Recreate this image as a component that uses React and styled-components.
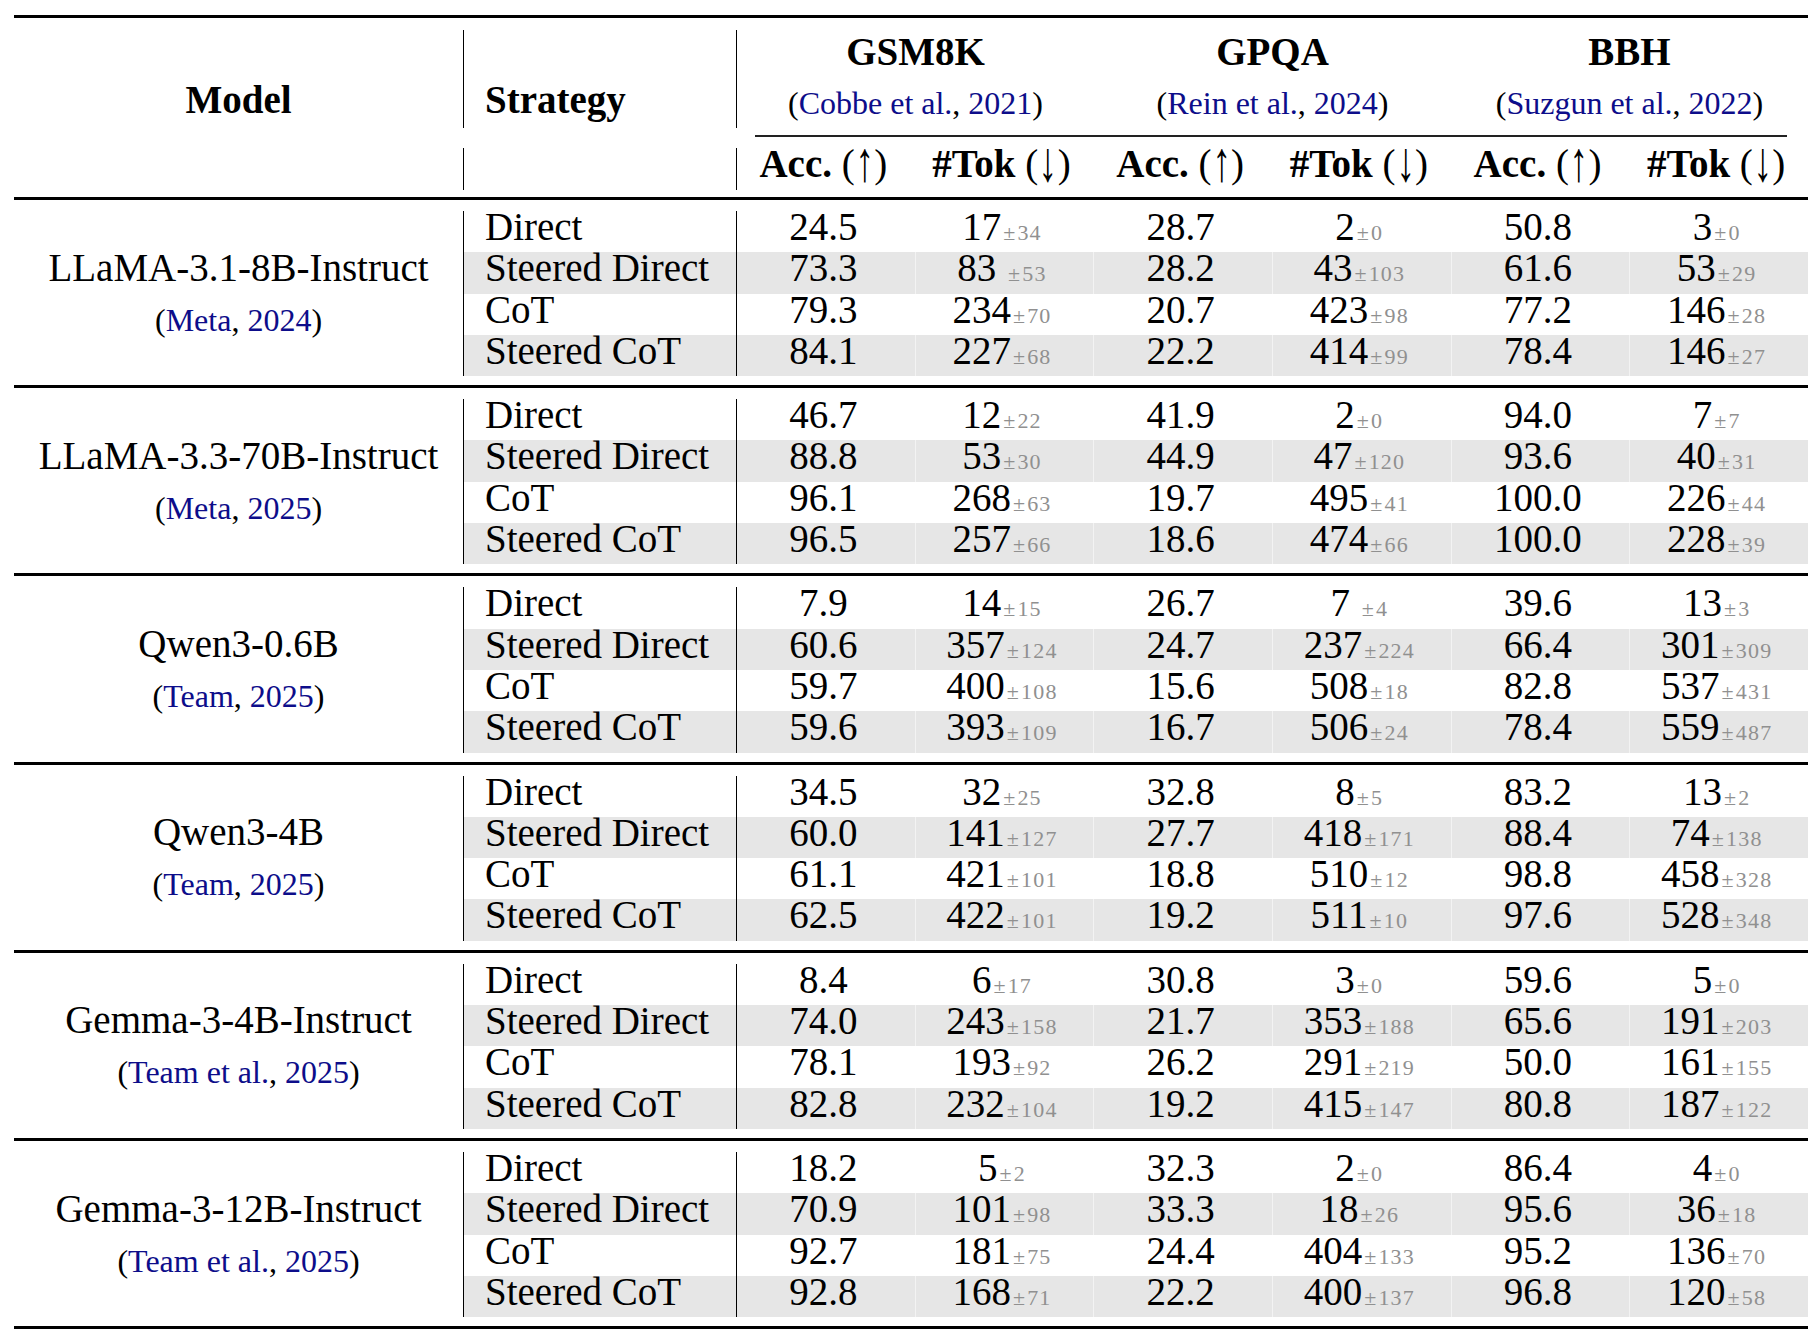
import React from "react";
import styled, { createGlobalStyle } from "styled-components";

const GlobalStyle = createGlobalStyle`
  html, body {
    margin: 0;
    padding: 0;
    background: #fff;
  }
  body {
    font-family: "Liberation Serif", "Times New Roman", serif;
    color: #000;
  }
`;

const COLS = "449px 273px repeat(6, 1fr)";
const SHADE = "#e6e6e6";
const VRULE = "1.4px solid #000";

const Page = styled.div`
  padding: 15px 0 0 14px;
`;

const Table = styled.div`
  width: 1794px;
`;

const Rule = styled.div`
  height: ${(p) => p.$weight}px;
  background: #000;
`;

// header, first line: titles and citations
const HeadTop = styled.div`
  display: grid;
  grid-template-columns: 449px 273px 1fr;
  padding-top: 12px;
`;

const HeadLabel = styled.div`
  height: 98px;
  box-sizing: border-box;
  padding-top: 47px;
  padding-left: ${(p) => (p.$ruled ? "21px" : "0")};
  line-height: 46px;
  font-size: 39px;
  font-weight: bold;
  text-align: ${(p) => (p.$ruled ? "left" : "center")};
  border-left: ${(p) => (p.$ruled ? VRULE : "none")};
`;

const Groups = styled.div`
  display: grid;
  grid-template-columns: repeat(3, 1fr);
  height: 98px;
  border-left: ${VRULE};
`;

const Group = styled.div`
  display: flex;
  flex-direction: column;
  align-items: center;
  white-space: nowrap;
`;

const GroupTitle = styled.div`
  font-size: 39px;
  font-weight: bold;
  line-height: 44px;
`;

const CiteLine = styled.div`
  font-size: 32px;
  line-height: ${(p) => p.$lh || 50}px;
  margin-top: ${(p) => p.$gap || 0}px;
`;

const CiteLink = styled.span`
  color: #0d0d8a;
`;

// thin rule under the dataset groups
const CmidRow = styled.div`
  display: grid;
  grid-template-columns: 449px 273px 1fr;
  padding: 7px 0 11.5px;
`;

const CmidLine = styled.div`
  grid-column: 3;
  height: 1.5px;
  margin: 0 21px 0 19px;
  background: #222;
`;

const HeadSub = styled.div`
  display: grid;
  grid-template-columns: ${COLS};
  height: 42px;
  margin-bottom: 7px;
`;

const SubCell = styled.div`
  border-left: ${(p) => (p.$ruled ? VRULE : "none")};
  text-align: center;
  padding-right: 5px;
  font-size: 39px;
  line-height: 31px;
  white-space: nowrap;
`;

const Bold = styled.b`
  font-weight: bold;
`;

const Arrow = styled.span`
  display: inline-block;
  transform: scale(0.95, 1.45);
  transform-origin: 50% 62%;
`;

// body blocks
const Block = styled.div`
  display: grid;
  grid-template-columns: ${COLS};
  grid-template-rows: repeat(4, 41.3px);
  padding: 11px 0 9px;
`;

const ModelCell = styled.div`
  grid-row: 1 / span 4;
  display: flex;
  flex-direction: column;
  justify-content: center;
  align-items: center;
  white-space: nowrap;
`;

const ModelName = styled.div`
  font-size: 39px;
  line-height: 52px;
`;

const StrategyCell = styled.div`
  border-left: ${VRULE};
  background: ${(p) => (p.$shaded ? SHADE : "transparent")};
  padding-left: 21px;
  font-size: 39px;
  line-height: 32px;
  white-space: nowrap;
`;

const ValueCell = styled.div`
  background: ${(p) => (p.$shaded ? SHADE : "transparent")};
  border-left: ${(p) =>
    p.$first ? VRULE : p.$shaded ? "1px solid #f3f3f3" : "1px solid transparent"};
  text-align: center;
  padding-right: 5px;
  font-size: 39px;
  line-height: 32px;
  white-space: nowrap;
`;

const Std = styled.span`
  font-size: 22px;
  letter-spacing: 1.2px;
  color: #909090;
`;

const Pm = styled.span`
  padding: 0 1px 0 2px;
`;

const datasets = [
  { name: "GSM8K", author: "Cobbe et al.", year: "2021" },
  { name: "GPQA", author: "Rein et al.", year: "2024" },
  { name: "BBH", author: "Suzgun et al.", year: "2022" },
];

const strategies = ["Direct", "Steered Direct", "CoT", "Steered CoT"];

const models = [
  {
    name: "LLaMA-3.1-8B-Instruct",
    author: "Meta",
    year: "2024",
    rows: [
      ["24.5", "17±34", "28.7", "2±0", "50.8", "3±0"],
      ["73.3", "83 ±53", "28.2", "43±103", "61.6", "53±29"],
      ["79.3", "234±70", "20.7", "423±98", "77.2", "146±28"],
      ["84.1", "227±68", "22.2", "414±99", "78.4", "146±27"],
    ],
  },
  {
    name: "LLaMA-3.3-70B-Instruct",
    author: "Meta",
    year: "2025",
    rows: [
      ["46.7", "12±22", "41.9", "2±0", "94.0", "7±7"],
      ["88.8", "53±30", "44.9", "47±120", "93.6", "40±31"],
      ["96.1", "268±63", "19.7", "495±41", "100.0", "226±44"],
      ["96.5", "257±66", "18.6", "474±66", "100.0", "228±39"],
    ],
  },
  {
    name: "Qwen3-0.6B",
    author: "Team",
    year: "2025",
    rows: [
      ["7.9", "14±15", "26.7", "7 ±4", "39.6", "13±3"],
      ["60.6", "357±124", "24.7", "237±224", "66.4", "301±309"],
      ["59.7", "400±108", "15.6", "508±18", "82.8", "537±431"],
      ["59.6", "393±109", "16.7", "506±24", "78.4", "559±487"],
    ],
  },
  {
    name: "Qwen3-4B",
    author: "Team",
    year: "2025",
    rows: [
      ["34.5", "32±25", "32.8", "8±5", "83.2", "13±2"],
      ["60.0", "141±127", "27.7", "418±171", "88.4", "74±138"],
      ["61.1", "421±101", "18.8", "510±12", "98.8", "458±328"],
      ["62.5", "422±101", "19.2", "511±10", "97.6", "528±348"],
    ],
  },
  {
    name: "Gemma-3-4B-Instruct",
    author: "Team et al.",
    year: "2025",
    rows: [
      ["8.4", "6±17", "30.8", "3±0", "59.6", "5±0"],
      ["74.0", "243±158", "21.7", "353±188", "65.6", "191±203"],
      ["78.1", "193±92", "26.2", "291±219", "50.0", "161±155"],
      ["82.8", "232±104", "19.2", "415±147", "80.8", "187±122"],
    ],
  },
  {
    name: "Gemma-3-12B-Instruct",
    author: "Team et al.",
    year: "2025",
    rows: [
      ["18.2", "5±2", "32.3", "2±0", "86.4", "4±0"],
      ["70.9", "101±98", "33.3", "18±26", "95.6", "36±18"],
      ["92.7", "181±75", "24.4", "404±133", "95.2", "136±70"],
      ["92.8", "168±71", "22.2", "400±137", "96.8", "120±58"],
    ],
  },
];

const Cite = ({ author, year, lh, gap }) => (
  <CiteLine $lh={lh} $gap={gap}>
    (<CiteLink>{author}</CiteLink>, <CiteLink>{year}</CiteLink>)
  </CiteLine>
);

const Value = ({ text }) => {
  const [main, std] = text.split("±");
  if (std === undefined) return <>{main}</>;
  return (
    <>
      {main}
      <Std>
        <Pm>±</Pm>
        {std}
      </Std>
    </>
  );
};

const ModelBlock = ({ model }) => (
  <Block>
    <ModelCell>
      <ModelName>{model.name}</ModelName>
      <Cite author={model.author} year={model.year} lh={52} />
    </ModelCell>
    {model.rows.map((row, r) => {
      const shaded = r % 2 === 1;
      return (
        <React.Fragment key={r}>
          <StrategyCell $shaded={shaded}>{strategies[r]}</StrategyCell>
          {row.map((v, c) => (
            <ValueCell key={c} $shaded={shaded} $first={c === 0}>
              <Value text={v} />
            </ValueCell>
          ))}
        </React.Fragment>
      );
    })}
  </Block>
);

export default function App() {
  return (
    <Page>
      <GlobalStyle />
      <Table>
        <Rule $weight={3} />
        <HeadTop>
          <HeadLabel>Model</HeadLabel>
          <HeadLabel $ruled>Strategy</HeadLabel>
          <Groups>
            {datasets.map((d) => (
              <Group key={d.name}>
                <GroupTitle>{d.name}</GroupTitle>
                <Cite author={d.author} year={d.year} gap={4} />
              </Group>
            ))}
          </Groups>
        </HeadTop>
        <CmidRow>
          <CmidLine />
        </CmidRow>
        <HeadSub>
          <SubCell />
          <SubCell $ruled />
          {datasets.map((d, i) => (
            <React.Fragment key={d.name}>
              <SubCell $ruled={i === 0}>
                <Bold>Acc.</Bold> (<Arrow>↑</Arrow>)
              </SubCell>
              <SubCell>
                <Bold>#Tok</Bold> (<Arrow>↓</Arrow>)
              </SubCell>
            </React.Fragment>
          ))}
        </HeadSub>
        <Rule $weight={3} />
        {models.map((m) => (
          <React.Fragment key={m.name}>
            <ModelBlock model={m} />
            <Rule $weight={3} />
          </React.Fragment>
        ))}
      </Table>
    </Page>
  );
}
